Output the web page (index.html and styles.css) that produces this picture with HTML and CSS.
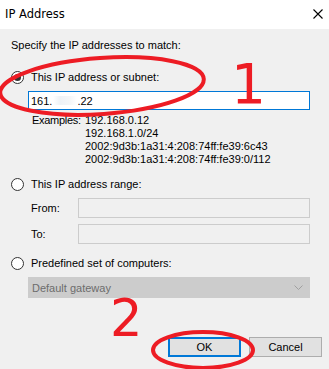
FILE: index.html
```html
<!DOCTYPE html>
<html>
<head>
<meta charset="utf-8">
<link rel="stylesheet" href="styles.css">
</head>
<body>
<div class="window">
  <div class="titlebar">
    <span class="title">IP Address</span>
    <svg class="close" width="10" height="10" viewBox="0 0 10 10"><path d="M0.5 0.5 L9.5 9.5 M9.5 0.5 L0.5 9.5" stroke="#000" stroke-width="1.1" fill="none"/></svg>
  </div>
  <div class="content">
    <div class="heading">Specify the IP addresses to match:</div>
    <div class="radio-row r1"><span class="radio checked"></span><span>This IP address or subnet:</span></div>
    <div class="ip-input"><span>161.</span><span class="blur">&nbsp;</span><span>.22</span></div>
    <div class="examples">
      <span class="ex-label">Examples:</span>
      <div class="ex-list">
        <div>192.168.0.12</div>
        <div>192.168.1.0/24</div>
        <div>2002:9d3b:1a31:4:208:74ff:fe39:6c43</div>
        <div>2002:9d3b:1a31:4:208:74ff:fe39:0/112</div>
      </div>
    </div>
    <div class="radio-row r2"><span class="radio"></span><span>This IP address range:</span></div>
    <div class="range-row from"><span class="range-label">From:</span><div class="field"></div></div>
    <div class="range-row to"><span class="range-label">To:</span><div class="field"></div></div>
    <div class="radio-row r3"><span class="radio"></span><span>Predefined set of computers:</span></div>
    <div class="select"><span>Default gateway</span>
      <svg class="chev" width="9" height="6" viewBox="0 0 9 6"><path d="M0.5 0.5 L4.5 4.5 L8.5 0.5" stroke="#a0a0a0" stroke-width="1" fill="none"/></svg>
    </div>
    <div class="buttons">
      <div class="btn ok">OK</div>
      <div class="btn">Cancel</div>
    </div>
  </div>
  <svg class="marks" width="329" height="369" viewBox="0 0 329 369">
    <ellipse cx="102" cy="86" rx="102" ry="28" transform="rotate(-4 102 86)" fill="none" stroke="#ed1c24" stroke-width="4"/>
    <ellipse cx="203" cy="350" rx="50" ry="18" fill="none" stroke="#ed1c24" stroke-width="4"/>
  </svg>
  <span class="num n1">1</span>
  <span class="num n2">2</span>
</div>
</body>
</html>
```

FILE: styles.css
```css
html, body {
  margin: 0;
  padding: 0;
}
body {
  font-family: "Liberation Sans", Arial, sans-serif;
  font-size: 11px;
  color: #000;
  background: #f0f0f0;
}
.window {
  position: relative;
  width: 329px;
  height: 369px;
  overflow: hidden;
  background: #f0f0f0;
}
.titlebar {
  height: 29px;
  background: #fff;
  display: flex;
  align-items: center;
  justify-content: space-between;
  padding: 0 5px 0 5px;
  box-sizing: border-box;
}
.title {
  font-family: "DejaVu Sans", sans-serif;
  font-size: 11.5px;
  margin-top: -1px;
}
.close {
  margin-right: 1px;
  margin-top: -1px;
}
.content {
  display: flex;
  flex-direction: column;
  padding: 9px 0 0 0;
}
.heading {
  height: 14px;
  line-height: 14px;
  padding-left: 11px;
}
.radio-row {
  display: flex;
  align-items: center;
  height: 14px;
  line-height: 14px;
  padding-left: 11px;
}
.radio {
  width: 11px;
  height: 11px;
  border: 1px solid #333;
  border-radius: 50%;
  background: #fff;
  margin-right: 7px;
  display: flex;
  align-items: center;
  justify-content: center;
  flex: none;
}
.radio.checked::after {
  content: "";
  width: 7px;
  height: 7px;
  border-radius: 50%;
  background: #333;
}
.r1 { margin-top: 18px; }
.r2 { margin-top: 11px; }
.r3 { margin-top: 12px; }
.ip-input {
  margin: 7px 0 0 28px;
  width: 282px;
  height: 19px;
  box-sizing: border-box;
  border: 1px solid #0078d7;
  background: #fff;
  display: flex;
  align-items: center;
  padding-left: 2px;
}
.blur {
  display: inline-block;
  width: 24px;
  height: 9px;
  margin-left: 1px;
  background: linear-gradient(90deg, #fff, #eef2f6 30%, #f4f6f8 70%, #fff);
}
.examples {
  display: flex;
  margin-top: 4px;
  line-height: 13px;
}
.ex-label {
  padding-left: 32px;
  width: 53px;
  letter-spacing: -0.3px;
}
.range-row {
  display: flex;
  align-items: center;
}
.range-row.from { margin-top: 7px; }
.range-row.to { margin-top: 6px; }
.range-label {
  width: 47px;
  padding-left: 31px;
}
.field {
  width: 232px;
  height: 20px;
  box-sizing: border-box;
  border: 1px solid #cccccc;
  background: #f0f0f0;
}
.select {
  margin: 7px 0 0 28px;
  width: 282px;
  height: 21px;
  box-sizing: border-box;
  border: 1px solid #cccccc;
  background: #cccccc;
  color: #6d6d6d;
  display: flex;
  align-items: center;
  justify-content: space-between;
  padding: 0 6px 0 3px;
}
.chev { margin-top: 1px; }
.buttons {
  display: flex;
  margin: 39px 0 0 168px;
  gap: 8px;
}
.btn {
  width: 73px;
  height: 20px;
  box-sizing: border-box;
  border: 1px solid #adadad;
  background: #e1e1e1;
  display: flex;
  align-items: center;
  justify-content: center;
}
.btn.ok {
  border: 2px solid #0078d7;
}
.marks {
  position: absolute;
  left: 0;
  top: 0;
  pointer-events: none;
}
.num {
  position: absolute;
  font-family: "DejaVu Sans", sans-serif;
  color: #ed1c24;
  line-height: 1;
}
.n1 {
  left: 231px;
  top: 57px;
  font-size: 55px;
}
.n2 {
  left: 110px;
  top: 293px;
  font-size: 51px;
}
```
